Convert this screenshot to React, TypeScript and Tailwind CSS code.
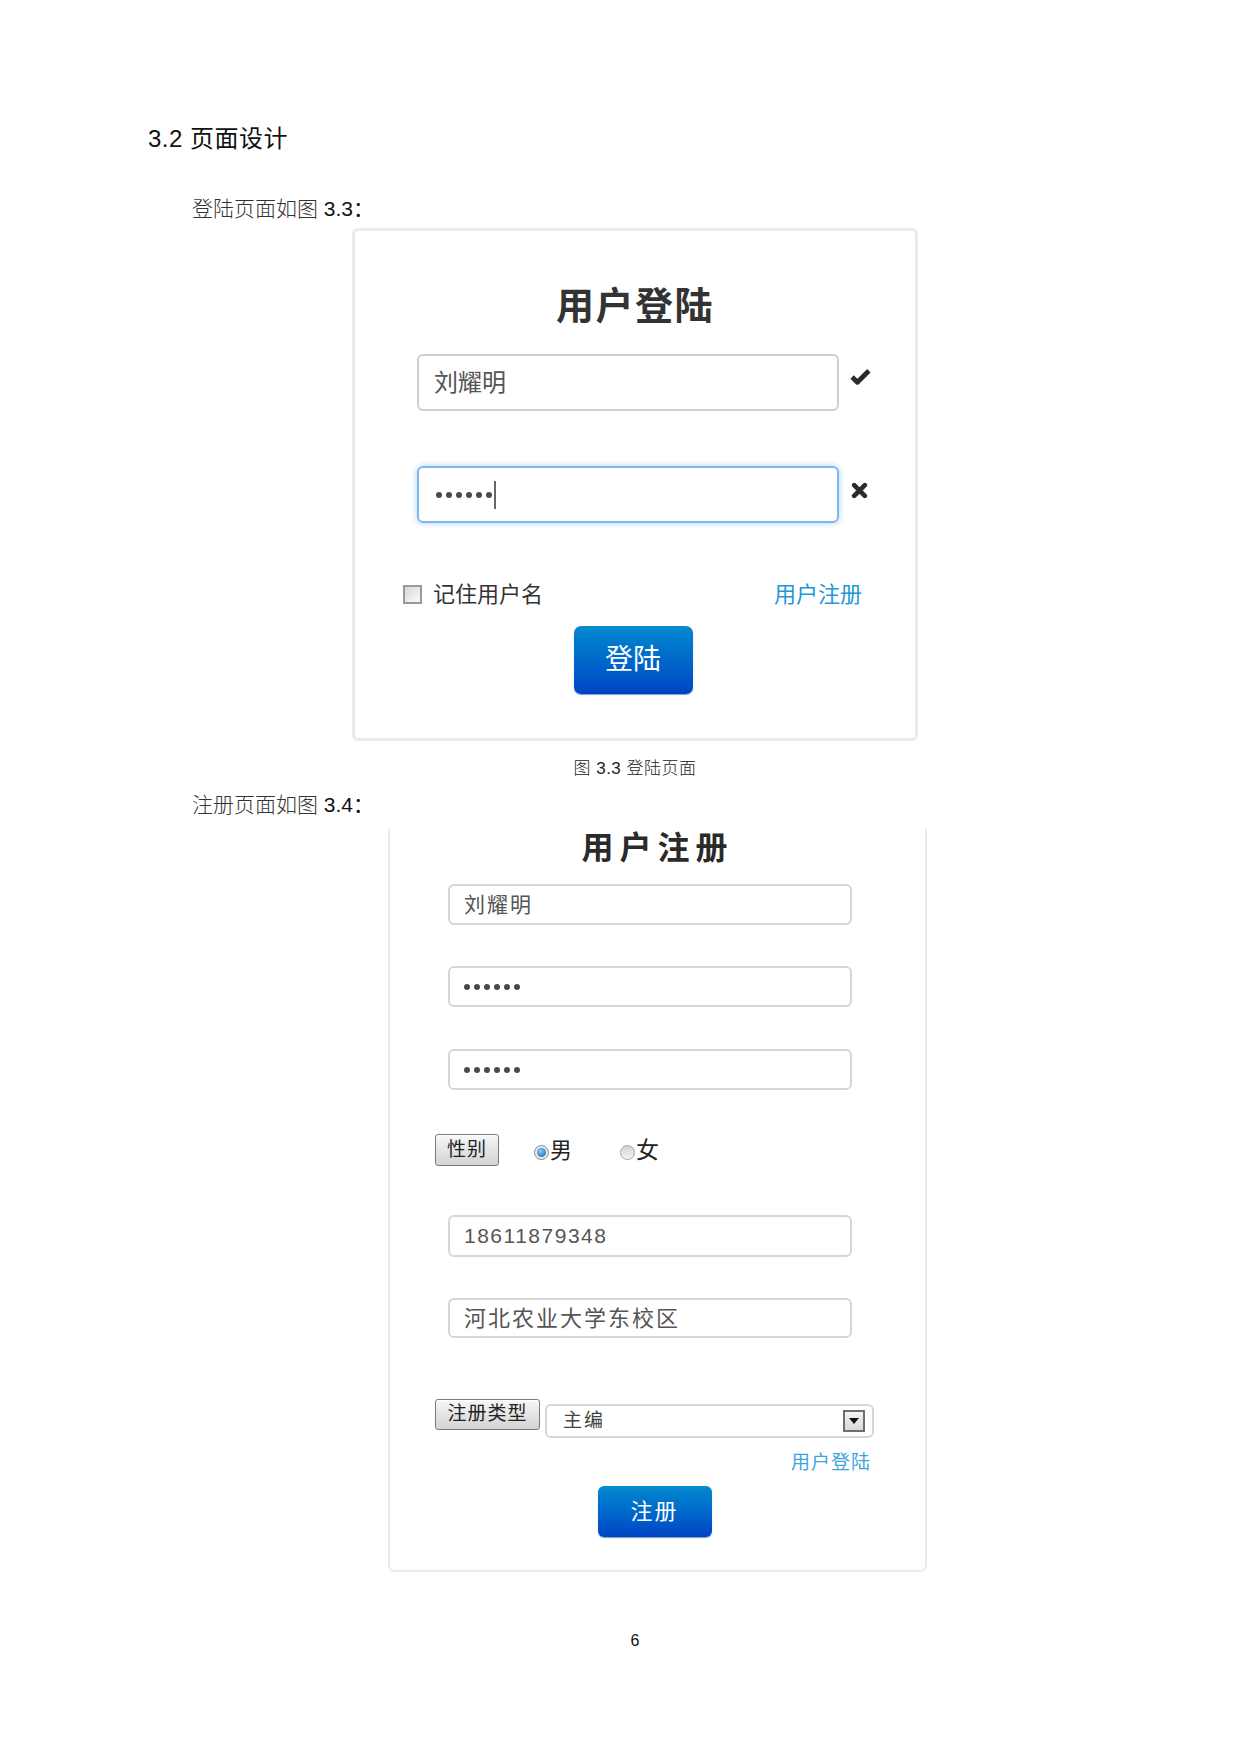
import React from "react";

const Dots: React.FC = () => (
	<div className="flex items-center gap-[4px]">
		{[0, 1, 2, 3, 4, 5].map((i) => (
			<span key={i} className="w-[6px] h-[6px] rounded-full bg-[#4a4a4a]" />
		))}
	</div>
);

const CheckIcon = () => (
	<svg width="23" height="19" viewBox="0 0 22 18">
		<polyline points="3,9.5 8,14.5 19,3.5" fill="none" stroke="#2b2b2b" strokeWidth="4.6" strokeLinejoin="round" />
	</svg>
);

const CrossIcon = () => (
	<svg width="17" height="17" viewBox="0 0 16 16">
		<path d="M3 3 L13 13 M13 3 L3 13" stroke="#2b2b2b" strokeWidth="4.4" strokeLinecap="round" />
	</svg>
);

const GrayButton: React.FC<{ label: string; className?: string }> = ({ label, className }) => (
	<div
		className={
			"flex items-center justify-center border border-[#7a7a7a] rounded-[3px] bg-linear-to-b from-[#f7f7f7] to-[#d2d2d2] text-[#222] shadow-[inset_0_1px_0_#fff] " +
			(className || "")
		}
	>
		{label}
	</div>
);

const RegInput: React.FC<{ children?: React.ReactNode; className?: string }> = ({ children, className }) => (
	<div
		className={
			"ml-[58px] w-[404px] flex items-center pl-[14px] border-2 border-[#d6d6d6] rounded-[6px] bg-white text-[#555] " +
			(className || "")
		}
	>
		{children}
	</div>
);

const App: React.FC = () => {
	return (
		<div className="w-[1241px] h-[1754px] bg-white text-[#111] font-['Liberation_Sans','Noto_Sans_CJK_SC',sans-serif]">
			<div className="pt-[123px] pl-[148px] text-[24px] leading-[32px] tracking-[0.5px]">3.2 页面设计</div>
			<p className="mt-[40px] pl-[192px] text-[21px] leading-[28px] font-light text-[#333]">
				登陆页面如图 <span className="font-normal text-[#111]">3.3：</span>
			</p>

			{/* login card */}
			<div className="mt-[5px] ml-[352px] w-[566px] border-[3px] border-[#ebebeb] rounded-[6px] bg-white pt-[52px] pb-[44px]">
				<h2 className="text-center text-[38px] leading-[46px] font-bold text-[#333] tracking-[1.5px]">用户登陆</h2>
				<div className="mt-[25px] pl-[62px] flex items-center">
					<div className="w-[422px] h-[57px] flex items-center pl-[15px] border-2 border-[#cfcfcf] rounded-[6px] text-[24px] text-[#555]">
						刘耀明
					</div>
					<div className="ml-[10px] mb-[12px]">
						<CheckIcon />
					</div>
				</div>
				<div className="mt-[55px] pl-[62px] flex items-center">
					<div className="w-[422px] h-[57px] flex items-center pl-[17px] border-2 border-[#7fb8ec] rounded-[6px] shadow-[0_0_6px_#a9d2f5]">
						<Dots />
						<span className="ml-[2px] w-[2px] h-[28px] bg-[#666]" />
					</div>
					<div className="ml-[12px] mb-[9px]">
						<CrossIcon />
					</div>
				</div>
				<div className="mt-[56px] pl-[48px] pr-[53px] h-[30px] flex items-center justify-between">
					<div className="flex items-center">
						<span className="w-[19px] h-[19px] border-2 border-[#9a9a9a] bg-linear-to-br from-[#d8d8d8] to-[#fafafa]" />
						<span className="ml-[11px] text-[22px] text-[#333]">记住用户名</span>
					</div>
					<span className="text-[22px] text-[#1e98d8]">用户注册</span>
				</div>
				<div className="mt-[17px] flex justify-center pr-[4px]">
					<div className="w-[119px] h-[68px] flex items-center justify-center rounded-[7px] bg-linear-to-b from-[#0b89cf] to-[#0143c4] text-white text-[28px] shadow-[0_1px_1px_#7a9ccc]">
						登陆
					</div>
				</div>
			</div>

			<p className="mt-[16px] ml-[352px] w-[566px] text-center text-[17px] leading-[24px] font-light tracking-[0.5px] text-[#222]">
				图 3.3 登陆页面
			</p>
			<p className="mt-[10px] pl-[192px] text-[21px] leading-[28px] font-light text-[#333]">
				注册页面如图 <span className="font-normal text-[#111]">3.4：</span>
			</p>

			{/* register card */}
			<div className="mt-[10px] ml-[388px] w-[539px] border-x-2 border-b-2 border-[#ebebeb] rounded-b-[6px] bg-white pb-[33px]">
				<h2 className="text-center text-[32px] leading-[38px] font-bold text-[#2a2a2a] tracking-[6px]">用户注册</h2>
				<RegInput className="mt-[17px] h-[41px] text-[21px] tracking-[2px]">刘耀明</RegInput>
				<RegInput className="mt-[41px] h-[41px]">
					<Dots />
				</RegInput>
				<RegInput className="mt-[42px] h-[41px]">
					<Dots />
				</RegInput>
				<div className="mt-[44px] ml-[45px] h-[32px] flex items-center">
					<GrayButton label="性别" className="w-[64px] h-[32px] text-[19px] tracking-[1px]" />
					<div className="ml-[35px] flex items-center">
						<span className="mt-[4px] w-[15px] h-[15px] rounded-full border border-[#8a8a8a] bg-[#e8e8e8] flex items-center justify-center">
							<span className="w-[9px] h-[9px] rounded-full bg-[radial-gradient(circle_at_40%_35%,#7fd0ff,#0a5ca8)]" />
						</span>
						<span className="ml-[1px] text-[22px] text-[#222]">男</span>
					</div>
					<div className="ml-[48px] flex items-center">
						<span className="mt-[4px] w-[15px] h-[15px] rounded-full border border-[#a5a5a5] bg-linear-to-b from-[#d4d4d4] to-[#f6f6f6]" />
						<span className="ml-[1px] text-[23px] text-[#222]">女</span>
					</div>
				</div>
				<RegInput className="mt-[49px] h-[42px] text-[21px] tracking-[1.5px] font-['Liberation_Sans',sans-serif]">
					18611879348
				</RegInput>
				<RegInput className="mt-[41px] h-[40px] text-[22px] tracking-[2px]">河北农业大学东校区</RegInput>
				<div className="mt-[61px] ml-[45px] flex items-start">
					<GrayButton label="注册类型" className="w-[105px] h-[31px] text-[19px] tracking-[1px]" />
					<div className="ml-[5px] mt-[5px] w-[329px] h-[34px] flex items-center justify-between pl-[16px] pr-[7px] border-2 border-[#d6d6d6] rounded-[6px] text-[19px] tracking-[2px] text-[#444]">
						<span>主编</span>
						<span className="w-[22px] h-[22px] border-2 border-[#6f6f6f] bg-linear-to-b from-[#f4f4f4] to-[#d8d8d8] flex items-center justify-center">
							<svg width="10" height="6" viewBox="0 0 10 6">
								<path d="M0 0 L10 0 L5 6 Z" fill="#111" />
							</svg>
						</span>
					</div>
				</div>
				<p className="mt-[13px] pr-[54px] text-right text-[19px] leading-[24px] tracking-[1px] text-[#3da5dc]">用户登陆</p>
				<div className="mt-[11px] flex justify-center pr-[6px]">
					<div className="w-[114px] h-[51px] flex items-center justify-center rounded-[6px] bg-linear-to-b from-[#0b89cf] to-[#0143c4] text-white text-[22px] tracking-[2px] shadow-[0_1px_1px_#7a9ccc]">
						注册
					</div>
				</div>
			</div>

			<p className="mt-[57px] ml-[352px] w-[566px] text-center text-[16px] leading-[24px] text-[#111]">6</p>
		</div>
	);
};

export default App;
